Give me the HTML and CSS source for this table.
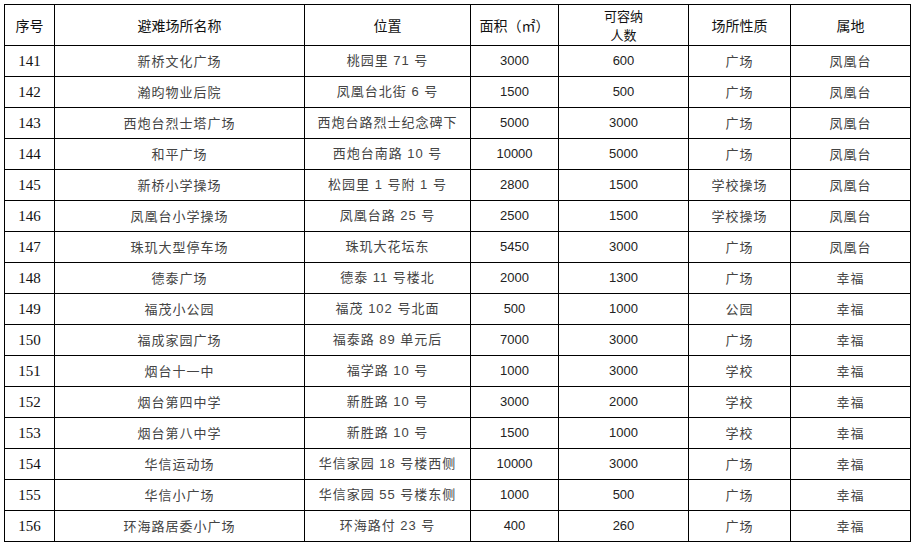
FILE: index.html
```html
<!DOCTYPE html>
<html lang="zh-CN">
<head>
<meta charset="utf-8">
<title>避难场所</title>
<link rel="stylesheet" href="styles.css">
</head>
<body>
<table class="grid">
  <colgroup>
    <col class="c-no"><col class="c-name"><col class="c-loc"><col class="c-area"><col class="c-cap"><col class="c-type"><col class="c-dist">
  </colgroup>
  <thead>
    <tr class="head">
      <th>序号</th><th>避难场所名称</th><th>位置</th><th>面积（㎡）</th><th><span class="wrap">可容纳<br>人数</span></th><th>场所性质</th><th>属地</th>
    </tr>
  </thead>
  <tbody>
    <tr><td class="no">141</td><td class="cn">新桥文化广场</td><td class="loc">桃园里 71 号</td><td class="num">3000</td><td class="num">600</td><td class="cn">广场</td><td class="cn">凤凰台</td></tr>
    <tr><td class="no">142</td><td class="cn">瀚昀物业后院</td><td class="loc">凤凰台北街 6 号</td><td class="num">1500</td><td class="num">500</td><td class="cn">广场</td><td class="cn">凤凰台</td></tr>
    <tr><td class="no">143</td><td class="cn">西炮台烈士塔广场</td><td class="loc">西炮台路烈士纪念碑下</td><td class="num">5000</td><td class="num">3000</td><td class="cn">广场</td><td class="cn">凤凰台</td></tr>
    <tr><td class="no">144</td><td class="cn">和平广场</td><td class="loc">西炮台南路 10 号</td><td class="num">10000</td><td class="num">5000</td><td class="cn">广场</td><td class="cn">凤凰台</td></tr>
    <tr><td class="no">145</td><td class="cn">新桥小学操场</td><td class="loc">松园里 1 号附 1 号</td><td class="num">2800</td><td class="num">1500</td><td class="cn">学校操场</td><td class="cn">凤凰台</td></tr>
    <tr><td class="no">146</td><td class="cn">凤凰台小学操场</td><td class="loc">凤凰台路 25 号</td><td class="num">2500</td><td class="num">1500</td><td class="cn">学校操场</td><td class="cn">凤凰台</td></tr>
    <tr><td class="no">147</td><td class="cn">珠玑大型停车场</td><td class="loc">珠玑大花坛东</td><td class="num">5450</td><td class="num">3000</td><td class="cn">广场</td><td class="cn">凤凰台</td></tr>
    <tr><td class="no">148</td><td class="cn">德泰广场</td><td class="loc">德泰 11 号楼北</td><td class="num">2000</td><td class="num">1300</td><td class="cn">广场</td><td class="cn">幸福</td></tr>
    <tr><td class="no">149</td><td class="cn">福茂小公园</td><td class="loc">福茂 102 号北面</td><td class="num">500</td><td class="num">1000</td><td class="cn">公园</td><td class="cn">幸福</td></tr>
    <tr><td class="no">150</td><td class="cn">福成家园广场</td><td class="loc">福泰路 89 单元后</td><td class="num">7000</td><td class="num">3000</td><td class="cn">广场</td><td class="cn">幸福</td></tr>
    <tr><td class="no">151</td><td class="cn">烟台十一中</td><td class="loc">福学路 10 号</td><td class="num">1000</td><td class="num">3000</td><td class="cn">学校</td><td class="cn">幸福</td></tr>
    <tr><td class="no">152</td><td class="cn">烟台第四中学</td><td class="loc">新胜路 10 号</td><td class="num">3000</td><td class="num">2000</td><td class="cn">学校</td><td class="cn">幸福</td></tr>
    <tr><td class="no">153</td><td class="cn">烟台第八中学</td><td class="loc">新胜路 10 号</td><td class="num">1500</td><td class="num">1000</td><td class="cn">学校</td><td class="cn">幸福</td></tr>
    <tr><td class="no">154</td><td class="cn">华信运动场</td><td class="loc">华信家园 18 号楼西侧</td><td class="num">10000</td><td class="num">3000</td><td class="cn">广场</td><td class="cn">幸福</td></tr>
    <tr><td class="no">155</td><td class="cn">华信小广场</td><td class="loc">华信家园 55 号楼东侧</td><td class="num">1000</td><td class="num">500</td><td class="cn">广场</td><td class="cn">幸福</td></tr>
    <tr><td class="no">156</td><td class="cn">环海路居委小广场</td><td class="loc">环海路付 23 号</td><td class="num">400</td><td class="num">260</td><td class="cn">广场</td><td class="cn">幸福</td></tr>
  </tbody>
</table>
</body>
</html>
```

FILE: styles.css
```css
html, body {
  background: #ffffff;
}
body {
  margin: 4px 0 0 4px;
  font-family: "Noto Sans CJK SC", sans-serif;
  color: #000;
}
.grid {
  border-collapse: collapse;
  table-layout: fixed;
  width: 906px;
}
.c-no { width: 50px; }
.c-name { width: 250px; }
.c-loc { width: 166px; }
.c-area { width: 88px; }
.c-cap { width: 130px; }
.c-type { width: 102px; }
.c-dist { width: 120px; }

.grid th, .grid td {
  border: 1px solid #000;
  padding: 0;
  text-align: center;
  vertical-align: middle;
  white-space: nowrap;
  overflow: hidden;
}
.head {
  height: 41px;
}
.grid th {
  font-weight: 400;
  font-size: 14px;
  line-height: 18px;
  color: #111;
}
.wrap {
  display: inline-block;
  text-align: center;
  font-size: 13px;
  line-height: 19px;
}
.grid tbody tr {
  height: 31px;
}
.grid td {
  font-size: 13px;
  line-height: 16px;
}
.grid td.no {
  font-family: "Liberation Serif", "Noto Sans CJK SC", serif;
  font-size: 15px;
  color: #111;
}
.grid td.cn {
  color: #444;
  letter-spacing: 1px;
}
.grid td.loc {
  font-family: "Liberation Sans", "Noto Sans CJK SC", sans-serif;
  color: #444;
  letter-spacing: 1px;
}
.grid td.num {
  font-family: "Liberation Sans", Arial, sans-serif;
  color: #222;
}
```
